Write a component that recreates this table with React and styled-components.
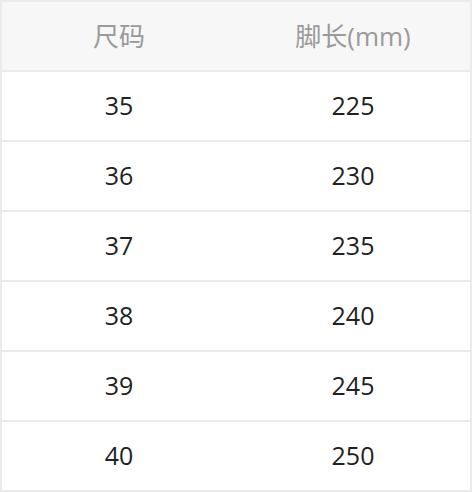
import React from 'react'
import styled, { createGlobalStyle } from 'styled-components';

const sizes = [
	{ size: 35, length: 225 },
	{ size: 36, length: 230 },
	{ size: 37, length: 235 },
	{ size: 38, length: 240 },
	{ size: 39, length: 245 },
	{ size: 40, length: 250 },
];

const App = () => {
	return (
		<>
			<GlobalStyle />
			<SizeTable>
				<thead>
					<tr>
						<HeadCell>尺码</HeadCell>
						<HeadCell>脚长(mm)</HeadCell>
					</tr>
				</thead>
				<tbody>
					{sizes.map((row) => (
						<tr key={row.size}>
							<Cell>{row.size}</Cell>
							<Cell>{row.length}</Cell>
						</tr>
					))}
				</tbody>
			</SizeTable>
		</>
	);
}

export default App


const GlobalStyle = createGlobalStyle`
	html, body {
		margin: 0;
		padding: 0;
		background: #fff;
	}
	body {
		font-family: "Open Sans", "Noto Sans CJK SC", sans-serif;
	}
`;

const SizeTable = styled.table`
	width: 472px;
	border-collapse: collapse;
	table-layout: fixed;
	border: 2px solid #ebebeb;
`;

const HeadCell = styled.th`
	height: 65px;
	padding: 0 0 3px;
	background: #f7f7f7;
	border: 2px solid #ebebeb;
	border-left: none;
	border-right: none;
	color: #9a9a9a;
	font-size: 26px;
	font-weight: 400;
	text-align: center;
	vertical-align: middle;
`;

const Cell = styled.td`
	height: 66px;
	padding: 0 0 2px;
	border: 2px solid #ebebeb;
	border-left: none;
	border-right: none;
	color: #222;
	font-size: 25px;
	text-align: center;
	vertical-align: middle;
`;
